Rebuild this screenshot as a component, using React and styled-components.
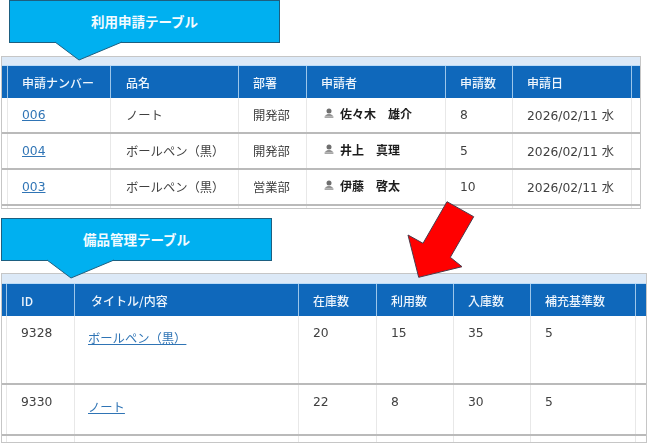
import styled, { createGlobalStyle } from 'styled-components';

const GlobalStyle = createGlobalStyle`
  html, body {
    margin: 0;
    padding: 0;
    height: 443px;
    overflow: hidden;
    background: #fff;
  }
  * { box-sizing: border-box; }
`;

const Page = styled.div`
  position: relative;
  width: 647px;
  height: 443px;
  overflow: hidden;
  font-family: "DejaVu Sans", "Noto Sans CJK JP", sans-serif;
  font-size: 12.3px;
  color: #404040;
  filter: blur(0.3px);
`;

const Section = styled.section`
  margin-top: ${(p) => p.$top}px;
`;

const Callout = styled.div`
  position: relative;
  z-index: 1;
  width: 271px;
  height: 43px;
  margin-left: ${(p) => p.$left}px;
  padding-bottom: 2px;
  display: flex;
  align-items: center;
  justify-content: center;
  background: #00b0f0;
  border: 1px solid #1d5f80;
  color: #f2fbff;
  font-family: "Noto Sans CJK JP", sans-serif;
  font-size: 13.5px;
  font-weight: 700;
`;

const CalloutTail = styled.svg`
  position: absolute;
  left: 44px;
  top: 40px;
`;

const Frame = styled.div`
  width: ${(p) => p.$width}px;
  margin-left: 1px;
  margin-top: ${(p) => p.$gap}px;
  border: 1px solid #c6c6c6;
  background: #fff;
`;

const Strip = styled.div`
  height: ${(p) => p.$height}px;
  background: #dce9f7;
`;

const Row = styled.div`
  display: grid;
  grid-template-columns: ${(p) => p.$cols.map((c) => `${c}px`).join(' ')};
  height: ${(p) => p.$height}px;
  border-bottom: ${(p) => (p.$last ? 'none' : '2px solid #bababa')};
`;

const HeadRow = styled(Row)`
  height: 33px;
  border-top: 1px solid #bcdcf7;
  border-bottom: none;
  background: #0f68bb;
`;

const HeadCell = styled.div`
  display: flex;
  align-items: center;
  padding-left: ${(p) => p.$pad ?? 14}px;
  border-right: 1px solid #9cc6ea;
  color: #eef5fc;
  font-family: "Noto Sans CJK JP", sans-serif;
  font-size: 12px;
  font-weight: 500;
  white-space: nowrap;
  &:last-child { border-right: none; }
`;

const Cell = styled.div`
  display: flex;
  align-items: ${(p) => (p.$top ? 'flex-start' : 'center')};
  gap: 5px;
  padding-left: ${(p) => p.$pad ?? 14}px;
  padding-top: ${(p) => p.$padTop || 0}px;
  border-right: 1px solid #e8e8e8;
  white-space: nowrap;
  &:last-child { border-right: none; }
`;

const Link = styled.a`
  color: #2f74b5;
  text-decoration: underline;
  text-underline-offset: 1px;
`;

const Applicant = styled.span`
  color: #1c1c1c;
  font-family: "Noto Sans CJK JP", sans-serif;
  font-size: 12px;
  font-weight: 700;
  margin-top: -4px;
`;

const PersonIcon = styled.svg`
  flex: none;
  margin: -4px 1px 0 3px;
`;

const Arrow = styled.svg`
  position: absolute;
  z-index: 2;
  left: 400px;
  top: 195px;
`;

const requestCols = [6, 103, 128, 68, 139, 67, 119, 8];
const stockCols = [5, 68, 224, 78, 77, 77, 105, 9];

const requests = [
  { no: '006', item: 'ノート', dept: '開発部', name: '佐々木　雄介', count: 8 },
  { no: '004', item: 'ボールペン（黒）', dept: '開発部', name: '井上　真理', count: 5 },
  { no: '003', item: 'ボールペン（黒）', dept: '営業部', name: '伊藤　啓太', count: 10 },
];

const stock = [
  { id: 9328, title: 'ボールペン（黒）', inStock: 20, used: 15, received: 35, min: 5, height: 69 },
  { id: 9330, title: 'ノート', inStock: 22, used: 8, received: 30, min: 5, height: 51 },
];

function Person() {
  return (
    <PersonIcon width="10" height="10" viewBox="0 0 10 10" fill="#6e6e6e">
      <circle cx="5" cy="2.9" r="2.5" />
      <path d="M1.2 7.7 C1.8 5.7 8.2 5.7 8.8 7.7 Z" />
      <rect x="0.6" y="8.5" width="8.8" height="1.1" />
    </PersonIcon>
  );
}

function Tail({ width = 70, depth = 20 }) {
  return (
    <CalloutTail width={width} height={depth + 3} viewBox={`0 0 ${width} ${depth + 3}`}>
      <path d="M1 1 L25 19 L68 1" fill="#00b0f0" stroke="#1d5f80" strokeWidth="1" />
      <path d="M2 0.5 H66 V1.2 H2 Z" fill="#00b0f0" />
    </CalloutTail>
  );
}

function RequestTable() {
  return (
    <Frame $width={640} $gap={13}>
      <Strip $height={8} />
      <HeadRow $cols={requestCols}>
        <HeadCell $pad={0} />
        <HeadCell>申請ナンバー</HeadCell>
        <HeadCell $pad={15}>品名</HeadCell>
        <HeadCell>部署</HeadCell>
        <HeadCell>申請者</HeadCell>
        <HeadCell>申請数</HeadCell>
        <HeadCell>申請日</HeadCell>
        <HeadCell $pad={0} />
      </HeadRow>
      {requests.map((r) => (
        <Row key={r.no} $cols={requestCols} $height={36}>
          <Cell $pad={0} />
          <Cell><Link href="#">{r.no}</Link></Cell>
          <Cell $pad={15}>{r.item}</Cell>
          <Cell>{r.dept}</Cell>
          <Cell><Person /><Applicant>{r.name}</Applicant></Cell>
          <Cell>{r.count}</Cell>
          <Cell>2026/02/11 水</Cell>
          <Cell $pad={0} />
        </Row>
      ))}
      <Row $cols={requestCols} $height={2} $last>
        {requestCols.map((c, i) => <Cell key={i} $pad={0} />)}
      </Row>
    </Frame>
  );
}

function StockTable() {
  return (
    <Frame $width={646} $gap={12}>
      <Strip $height={9} />
      <HeadRow $cols={stockCols}>
        <HeadCell $pad={0} />
        <HeadCell>ID</HeadCell>
        <HeadCell $pad={16}>タイトル/内容</HeadCell>
        <HeadCell>在庫数</HeadCell>
        <HeadCell>利用数</HeadCell>
        <HeadCell>入庫数</HeadCell>
        <HeadCell>補充基準数</HeadCell>
        <HeadCell $pad={0} />
      </HeadRow>
      {stock.map((s) => (
        <Row key={s.id} $cols={stockCols} $height={s.height}>
          <Cell $pad={0} />
          <Cell $top $padTop={10}>{s.id}</Cell>
          <Cell $top $padTop={13} $pad={13}><Link href="#">{s.title}</Link></Cell>
          <Cell $top $padTop={10}>{s.inStock}</Cell>
          <Cell $top $padTop={10}>{s.used}</Cell>
          <Cell $top $padTop={10}>{s.received}</Cell>
          <Cell $top $padTop={10}>{s.min}</Cell>
          <Cell $pad={0} />
        </Row>
      ))}
      <Row $cols={stockCols} $height={6} $last>
        {stockCols.map((c, i) => <Cell key={i} $pad={0} />)}
      </Row>
    </Frame>
  );
}

export default function App() {
  return (
    <Page>
      <GlobalStyle />
      <Section $top={0}>
        <Callout $left={9}>
          利用申請テーブル
          <Tail />
        </Callout>
        <RequestTable />
      </Section>
      <Section $top={9}>
        <Callout $left={1}>
          備品管理テーブル
          <Tail />
        </Callout>
        <StockTable />
      </Section>
      <Arrow width="80" height="90" viewBox="400 195 80 90">
        <path
          d="M418.7 277.3 L408 235 L423 243.3 L447 201.7 L473.7 216.7 L450.3 257.3 L462 266.7 Z"
          fill="#ff0000"
          stroke="#4a3a4a"
          strokeWidth="1"
          strokeLinejoin="miter"
        />
      </Arrow>
    </Page>
  );
}
